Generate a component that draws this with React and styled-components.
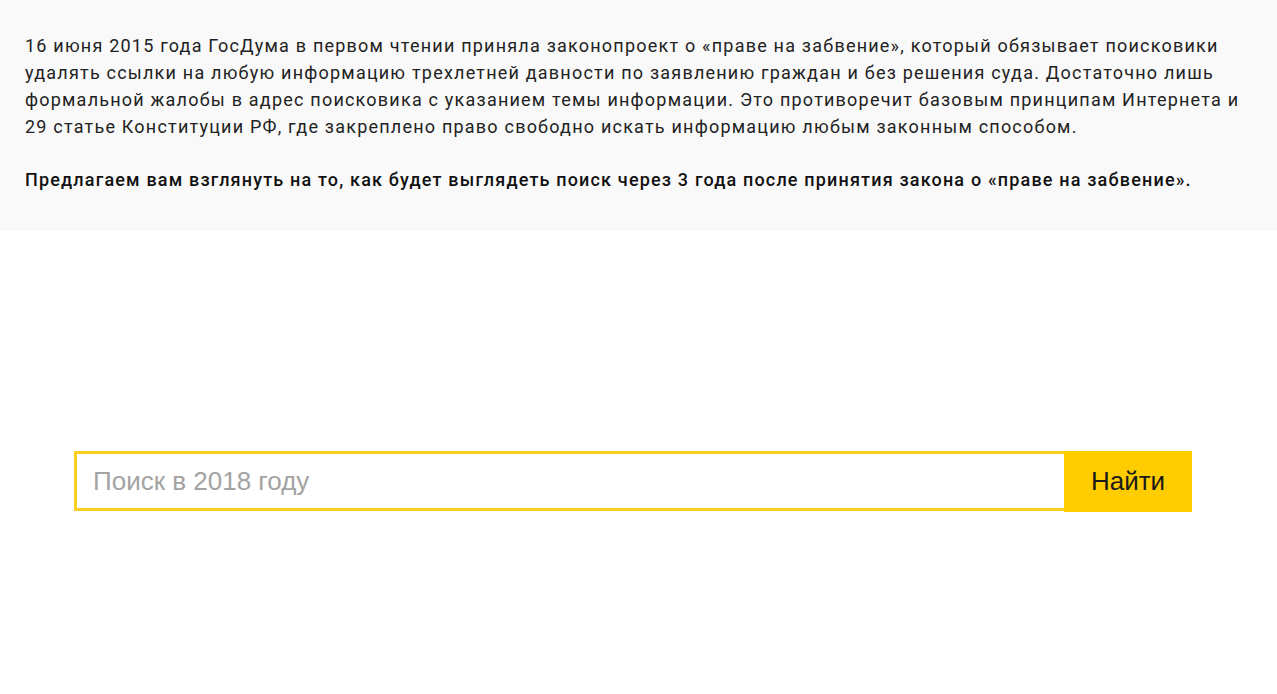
import React from "react";
import styled, { createGlobalStyle } from "styled-components";

const GlobalStyle = createGlobalStyle`
  html, body {
    margin: 0;
    padding: 0;
    background: #ffffff;
  }
`;

// Grey intro panel at the top
const Intro = styled.section`
  background: #f9f9f9;
  padding: 32px 25px 38px;
  font-family: Roboto, "Liberation Sans", sans-serif;
  font-size: 18px;
  line-height: 27px;
  color: #222;
`;

const Paragraph = styled.p`
  margin: 0;
  font-weight: ${(p) => (p.$bold ? 500 : 400)};
  letter-spacing: ${(p) => (p.$bold ? "1.17px" : "1.21px")};
  color: ${(p) => (p.$bold ? "#111" : "#222")};

  & + & {
    margin-top: 26px;
  }
`;

// Search form
const SearchRow = styled.form`
  display: flex;
  margin: 220px 0 0 74px;
  width: 1118px;
`;

const SearchInput = styled.input`
  flex: 1;
  height: 60px;
  box-sizing: border-box;
  border: 3px solid #f8cf1e;
  border-right: none;
  padding: 0 16px;
  font-family: "Liberation Sans", Arial, sans-serif;
  font-size: 26px;
  color: #222;
  outline: none;

  &::placeholder {
    color: #a3a3a3;
  }
`;

const SearchButton = styled.button`
  width: 128px;
  height: 61px;
  border: none;
  background: #ffcc00;
  font-family: "Liberation Sans", Arial, sans-serif;
  font-size: 26px;
  color: #1a1a1a;
  cursor: pointer;
  padding: 0;
`;

export default function App() {
  return (
    <>
      <GlobalStyle />
      <Intro>
        <Paragraph>
          16 июня 2015 года ГосДума в первом чтении приняла законопроект о «праве на забвение», который обязывает поисковики
          удалять ссылки на любую информацию трехлетней давности по заявлению граждан и без решения суда. Достаточно лишь
          формальной жалобы в адрес поисковика с указанием темы информации. Это противоречит базовым принципам Интернета и
          29 статье Конституции РФ, где закреплено право свободно искать информацию любым законным способом.
        </Paragraph>
        <Paragraph $bold>
          Предлагаем вам взглянуть на то, как будет выглядеть поиск через 3 года после принятия закона о «праве на забвение».
        </Paragraph>
      </Intro>
      <SearchRow onSubmit={(e) => e.preventDefault()}>
        <SearchInput placeholder="Поиск в 2018 году" />
        <SearchButton type="submit">Найти</SearchButton>
      </SearchRow>
    </>
  );
}
